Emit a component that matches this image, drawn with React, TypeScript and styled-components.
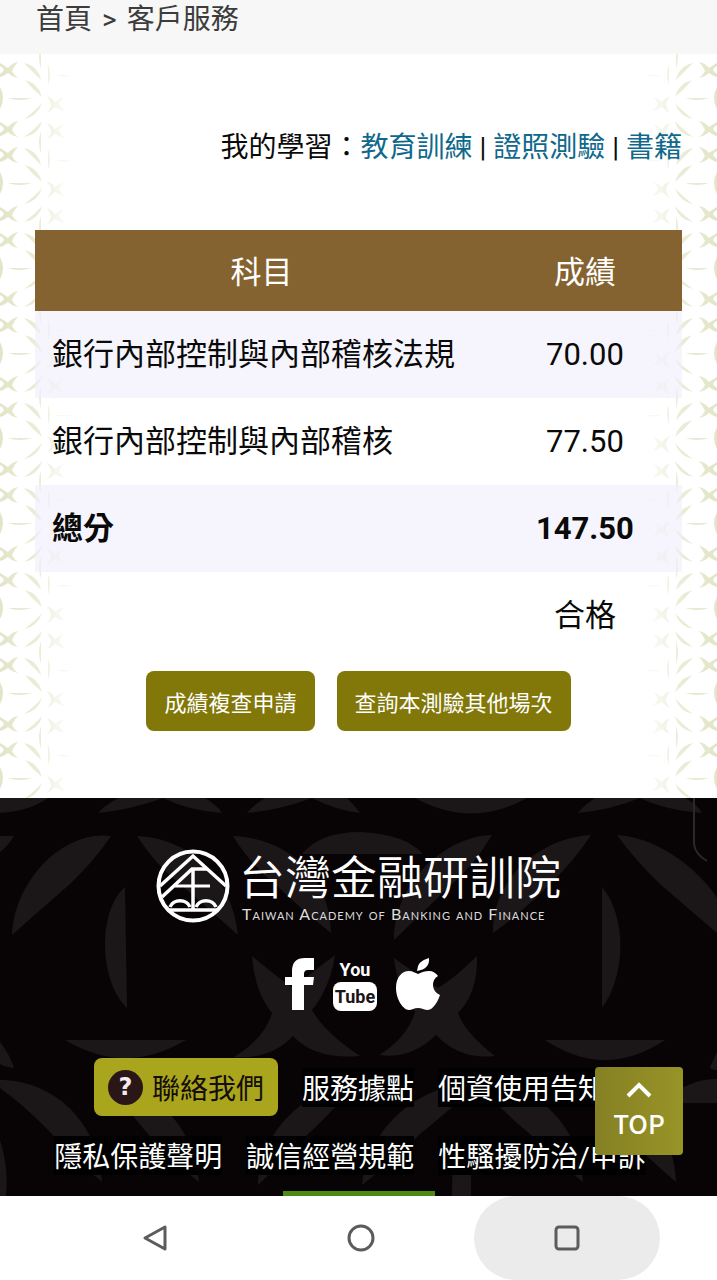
import React from "react";
import styled, { createGlobalStyle } from "styled-components";

const GlobalStyle = createGlobalStyle`
  *, *::before, *::after { box-sizing: border-box; }
  html, body { margin: 0; padding: 0; background: #fff; }
  body {
    font-family: Roboto, "Noto Sans CJK TC", sans-serif;
    font-size: 28px;
    color: #0a0a0a;
  }
  a { color: inherit; text-decoration: none; }
  button { font: inherit; border: 0; cursor: pointer; }
`;

const Page = styled.div`
  min-height: 100vh;
  display: flex;
  flex-direction: column;
`;

const Breadcrumb = styled.nav`
  display: flex;
  gap: 10px;
  padding: 0 36px 14px;
  line-height: 40px;
  background: #f7f7f7;
  color: #3c3c3c;
`;

const Main = styled.main`
  position: relative;
  padding: 72px 35px 67px;
`;

const SideArt = styled.svg<{ $side: "left" | "right" }>`
  position: absolute;
  top: 0;
  ${(p) => p.$side}: 0;
  width: 80px;
  height: 100%;
  ${(p) => p.$side === "right" && "transform: scaleX(-1);"}
`;

const Content = styled.div`
  position: relative;
`;

const Learning = styled.p`
  margin: 0 0 60px;
  line-height: 44px;
  text-align: right;
`;

const TextLink = styled.a`
  && { color: #10688c; }
`;

const Scores = styled.table`
  width: 100%;
  border-collapse: collapse;
  table-layout: fixed;
  font-size: 31px;
  line-height: 40px;
`;

const HeadCell = styled.th<{ $width: string }>`
  width: ${(p) => p.$width};
  height: 81px;
  padding: 5px 17px 0;
  background: #856330;
  color: #fff;
  font-weight: 400;
  text-align: center;
`;

const Row = styled.tr<{ $shaded?: boolean; $strong?: boolean }>`
  background: ${(p) => (p.$shaded ? "rgba(240, 239, 251, 0.6)" : "transparent")};
  font-weight: ${(p) => (p.$strong ? 700 : 400)};
`;

const Cell = styled.td<{ $center?: boolean }>`
  height: 87px;
  padding: 0 17px;
  text-align: ${(p) => (p.$center ? "center" : "left")};
`;

const Actions = styled.div`
  display: flex;
  flex-wrap: wrap;
  justify-content: center;
  gap: 22px;
  margin-top: 12px;
`;

const ActionButton = styled.button`
  height: 60px;
  padding: 0 18px;
  border-radius: 8px;
  background: #827709;
  color: #fff;
  && { font-size: 22px; }
`;

const Footer = styled.footer`
  position: relative;
  overflow: hidden;
  display: flex;
  flex-direction: column;
  align-items: center;
  padding-top: 51px;
  background: #080405;
  color: #fff;
`;

const FooterArt = styled.svg`
  position: absolute;
  inset: 0;
  width: 100%;
  height: 100%;
`;

const Brand = styled.a`
  position: relative;
  display: flex;
  align-items: center;
  gap: 9px;
  height: 74px;
`;

const BrandNames = styled.span`
  display: flex;
  flex-direction: column;
  gap: 8px;
`;

const BrandName = styled.span`
  font-family: "Noto Sans CJK TC", sans-serif;
  font-weight: 350;
  font-size: 46px;
  line-height: 48px;
`;

const BrandLatin = styled.span`
  padding-left: 3px;
  color: #dcdcdc;
  font-family: Lato, sans-serif;
  font-variant: small-caps;
  font-size: 16px;
  line-height: 16px;
  letter-spacing: 1px;
  white-space: nowrap;
`;

const Social = styled.div`
  position: relative;
  display: flex;
  align-items: center;
  gap: 18px;
  height: 54px;
  margin-top: 34px;
  padding-left: 8px;
`;

const SocialLink = styled.a`
  display: flex;
`;

const YouTube = styled.a`
  display: flex;
  flex-direction: column;
  align-items: center;
  width: 44px;
  font-weight: 700;
  font-size: 18px;
  line-height: 24px;
`;

const Tube = styled.span`
  width: 44px;
  height: 29px;
  border-radius: 8px;
  background: #fff;
  color: #1a1617;
  line-height: 29px;
  text-align: center;
`;

const FooterLinks = styled.div`
  position: relative;
  display: flex;
  flex-direction: column;
  align-items: center;
  gap: 15px;
  margin-top: 47px;
  padding-right: 17px;
`;

const LinkRow = styled.div<{ $height: number }>`
  display: flex;
  align-items: center;
  gap: 24px;
  height: ${(p) => p.$height}px;
  white-space: nowrap;
`;

const FooterLink = styled.a`
  padding-top: 5px;
  background: #000;
  line-height: 34px;
`;

const Contact = styled.a`
  display: flex;
  align-items: center;
  gap: 9px;
  height: 58px;
  padding: 0 14px;
  border-radius: 8px;
  background: #a9a51d;
  && { color: #140d0a; }
`;

const QuestionMark = styled.span`
  width: 35px;
  height: 35px;
  border-radius: 50%;
  background: #2a1517;
  color: #f3e9ee;
  font-family: "DejaVu Sans", sans-serif;
  font-weight: 700;
  font-size: 24px;
  line-height: 35px;
  text-align: center;
`;

const Badge = styled.div`
  position: relative;
  width: 152px;
  height: 5px;
  margin-top: 12px;
  background: #4c8a12;
`;

const TopButton = styled.button`
  position: absolute;
  right: 34px;
  bottom: 41px;
  display: flex;
  flex-direction: column;
  align-items: center;
  gap: 8px;
  width: 88px;
  height: 88px;
  padding: 14px 0 0;
  border-radius: 4px;
  background: linear-gradient(90deg, #858024, #999426);
  color: #fff;
  && {
    font-family: "Noto Sans CJK TC", sans-serif;
    font-weight: 500;
    font-size: 26px;
    line-height: 32px;
  }
`;

const SystemBar = styled.nav`
  display: grid;
  grid-template-columns: repeat(3, 1fr);
  justify-items: center;
  padding: 0 47px 0 52px;
  background: #fff;
`;

const SystemButton = styled.button<{ $pressed?: boolean }>`
  display: flex;
  align-items: center;
  justify-content: center;
  width: 90%;
  height: 84px;
  padding: 0;
  border-radius: 42px;
  background: ${(p) => (p.$pressed ? "#ebebeb" : "transparent")};
`;

function SidePattern({ side }: { side: "left" | "right" }) {
  const tile = `${side}-tile`;
  const fade = `${side}-fade`;
  const mask = `${side}-mask`;
  return (
    <SideArt $side={side} aria-hidden="true">
      <defs>
        <pattern id={tile} width="80" height="85" patternUnits="userSpaceOnUse">
          <g fill="#e3e5c8">
            <path d="M0 9Q5 12 8 14Q12 9 18 8Q14 12 12 17Q14 21 18 24Q12 23 8 19Q4 22 0 23V20Q3 18 4 16Q3 13 0 12Z" />
            <path d="M0 68Q5 71 8 73Q12 68 18 67Q14 71 12 76Q14 80 18 83Q12 82 8 78Q4 81 0 82V79Q3 77 4 75Q3 72 0 71Z" />
            <path d="M0 33Q6 44 0 55Z" />
            <path d="M8 44H32Q20 48 8 44Z" />
            <path d="M24 9Q38 12 41 26Q33 18 24 9Z" />
            <path d="M25 26Q39 30 42 43Q33 36 25 26Z" />
            <path d="M42 49Q38 62 24 65Q33 59 42 49Z" />
            <path d="M42 67Q39 80 24 83Q33 77 42 67Z" />
            <path d="M41 -8Q37 3 41 15Z" />
            <path d="M41 77Q37 88 41 100Z" />
            <path d="M48 10Q52 20 48 31Z" />
            <path d="M56 21H73Q64 24 56 21Z" />
            <path d="M47 42Q52 44 55 48Q59 44 64 43Q60 47 59 50Q61 54 65 57Q59 56 55 53Q51 57 47 59Q51 54 51 50Q50 46 47 42Z" />
            <path d="M47 69Q52 71 55 75Q59 71 64 70Q60 74 59 77Q61 81 65 84Q59 83 55 80Q51 84 47 85Q51 81 51 77Q50 73 47 69Z" />
          </g>
        </pattern>
        <linearGradient id={fade}>
          <stop offset="0" stopColor="#fff" />
          <stop offset="0.5" stopColor="#fff" stopOpacity="0.7" />
          <stop offset="0.65" stopColor="#fff" stopOpacity="0.4" />
          <stop offset="1" stopColor="#fff" stopOpacity="0" />
        </linearGradient>
        <mask id={mask}>
          <rect width="80" height="100%" fill={`url(#${fade})`} />
        </mask>
      </defs>
      <rect width="80" height="100%" fill={`url(#${tile})`} mask={`url(#${mask})`} />
    </SideArt>
  );
}

function FooterPattern() {
  return (
    <FooterArt viewBox="0 0 717 398" preserveAspectRatio="xMidYMin slice" aria-hidden="true">
      <g fill="#1b1718">
        <path d="M0 0H48Q30 13 0 15Z" />
        <path d="M118 0H163Q130 12 98 15Q104 8 118 0Z" />
        <path d="M163 0H205Q218 8 222 15Q190 13 163 0Z" />
        <path d="M265 0H312Q280 12 247 15Q252 8 265 0Z" />
        <path d="M312 0H347Q355 8 360 15Q335 12 312 0Z" />
        <path d="M415 0H527Q472 31 415 0Z" />
        <path d="M595 0H640Q610 12 578 15Q583 8 595 0Z" />
        <path d="M640 0H685Q699 8 702 15Q665 12 640 0Z" />
        <path d="M0 38H14Q8 48 0 54Z" />
        <path d="M111 38C65 32 15 80 12 137Q40 112 70 86Q95 62 111 38Z" />
        <path d="M137 38C185 40 232 75 238 137Q210 112 180 86Q155 66 137 38Z" />
        <path d="M233 38C285 40 330 75 331 135Q302 112 275 86Q250 66 233 38Z" />
        <path d="M302 56Q320 34 360 34Q405 36 423 56Z" />
        <path d="M492 37C445 38 394 85 394 142Q425 112 452 86Q475 66 492 37Z" />
        <path d="M591 37C540 40 492 80 493 135Q525 112 550 86Q575 62 591 37Z" />
        <path d="M617 37C665 40 705 80 717 100V135Q690 112 660 86Q635 62 617 37Z" />
        <path d="M125 89C98 112 98 182 127 210Z" />
        <path d="M602 89C626 118 627 175 602 210Z" />
        <path d="M252 158Q285 185 293 190Q305 180 335 157Q330 190 312 212Q325 235 360 258Q315 262 293 238Q270 262 234 259Q265 240 272 215Q255 195 252 158Z" />
        <path d="M394 160Q425 182 438 190Q455 180 477 158Q478 195 458 215Q465 235 495 258Q460 262 436 237Q410 262 379 257Q407 240 415 214Q397 190 394 160Z" />
        <path d="M65 242H186Q125 278 65 242Z" />
        <path d="M545 242H665Q605 282 545 242Z" />
        <path d="M0 244Q10 257 14 270Q5 269 0 266Z" />
        <path d="M717 254V272Q710 272 710 269Z" />
        <path d="M0 282C50 282 98 320 102 384Q75 362 50 334Q25 308 0 290Z" />
        <path d="M110 282C155 290 195 330 199 384Q170 362 148 336Q125 310 110 282Z" />
        <path d="M355 284C310 290 260 330 258 387Q285 362 308 336Q335 312 355 284Z" />
        <path d="M479 284C430 284 370 320 362 387Q395 362 420 336Q450 312 479 284Z" />
        <path d="M479 284C530 284 578 320 583 384Q555 362 530 336Q500 312 479 284Z" />
        <path d="M580 284C625 284 674 320 676 384Q650 362 625 336Q600 312 580 284Z" />
        <path d="M660 305Q690 280 717 281V305Z" />
        <path d="M0 342Q9 370 6 398H0Z" />
        <path d="M453 342H471V398H452Z" />
      </g>
      <path d="M694 0V46Q695 56 707 63" fill="none" stroke="#2b2829" strokeWidth="2" />
    </FooterArt>
  );
}

function Emblem() {
  return (
    <svg width="74" height="74" viewBox="0 0 74 74" fill="none" stroke="#fff" strokeWidth="4" aria-hidden="true">
      <circle cx="37" cy="37" r="34.5" />
      <path d="M4 37L37 7L70 37" strokeWidth="3.5" />
      <path d="M6 48L36 20H51" strokeWidth="3.5" />
      <path d="M19 37H54" strokeWidth="3" />
      <path d="M37 19V60" strokeWidth="3.5" />
      <path d="M12 61H62" strokeWidth="3.5" />
      <path d="M14 58A10.500 9 0 0 1 34 58" strokeWidth="3.5" />
      <path d="M40 58A10.500 9 0 0 1 60 58" strokeWidth="3.5" />
    </svg>
  );
}

const rows = [
  { name: "銀行內部控制與內部稽核法規", score: "70.00", shaded: true },
  { name: "銀行內部控制與內部稽核", score: "77.50" },
  { name: "總分", score: "147.50", shaded: true, strong: true },
  { name: "", score: "合格" },
];

export default function App() {
  return (
    <Page>
      <GlobalStyle />
      <Breadcrumb aria-label="breadcrumb">
        <a href="#home">首頁</a>
        <span>&gt;</span>
        <a href="#service">客戶服務</a>
      </Breadcrumb>

      <Main>
        <SidePattern side="left" />
        <SidePattern side="right" />
        <Content>
          <Learning>
            我的學習：<TextLink href="#training">教育訓練</TextLink> |{" "}
            <TextLink href="#exams">證照測驗</TextLink> | <TextLink href="#books">書籍</TextLink>
          </Learning>
          <Scores>
            <thead>
              <tr>
                <HeadCell scope="col" $width="70%">科目</HeadCell>
                <HeadCell scope="col" $width="30%">成績</HeadCell>
              </tr>
            </thead>
            <tbody>
              {rows.map((r) => (
                <Row key={r.score} $shaded={r.shaded} $strong={r.strong}>
                  <Cell>{r.name}</Cell>
                  <Cell $center>{r.score}</Cell>
                </Row>
              ))}
            </tbody>
          </Scores>
          <Actions>
            <ActionButton type="button">成績複查申請</ActionButton>
            <ActionButton type="button">查詢本測驗其他場次</ActionButton>
          </Actions>
        </Content>
      </Main>

      <Footer>
        <FooterPattern />
        <Brand href="#home">
          <Emblem />
          <BrandNames>
            <BrandName>台灣金融研訓院</BrandName>
            <BrandLatin>Taiwan Academy of Banking and Finance</BrandLatin>
          </BrandNames>
        </Brand>
        <Social>
          <SocialLink href="#facebook" aria-label="Facebook">
            <svg width="30" height="54" viewBox="0 0 30 54" fill="#fff" aria-hidden="true">
              <path d="M29 1V13H23Q19 13 19 17V20H29L28 28H19V53H7V28H0V20H7V14Q7 1 20 1Z" />
            </svg>
          </SocialLink>
          <YouTube href="#youtube">
            <span>You</span>
            <Tube>Tube</Tube>
          </YouTube>
          <SocialLink href="#apple" aria-label="Apple">
            <svg width="45" height="54" viewBox="0 0 45 54" fill="#fff" aria-hidden="true">
              <path d="M34 1Q35 12 22 14Q22 4 34 1Z" />
              <path d="M23 17C27 15 30 14 34 14C38 14 41 16 43 19C36 23 36 34 45 38C43 44 38 53 33 53C29 53 27 51 23 51C19 51 17 53 14 53C8 53 1 42 1 31C1 20 7 14 14 14C18 14 20 16 23 17Z" />
            </svg>
          </SocialLink>
        </Social>
        <FooterLinks>
          <LinkRow $height={58}>
            <Contact href="#contact">
              <QuestionMark aria-hidden="true">?</QuestionMark>
              聯絡我們
            </Contact>
            <FooterLink href="#locations">服務據點</FooterLink>
            <FooterLink href="#personal-data">個資使用告知</FooterLink>
          </LinkRow>
          <LinkRow $height={48}>
            <FooterLink href="#privacy">隱私保護聲明</FooterLink>
            <FooterLink href="#integrity">誠信經營規範</FooterLink>
            <FooterLink href="#harassment">性騷擾防治/申訴</FooterLink>
          </LinkRow>
        </FooterLinks>
        <Badge />
        <TopButton type="button">
          <svg width="26" height="18" viewBox="0 0 26 18" fill="none" stroke="#fff" strokeWidth="4" aria-hidden="true">
            <path d="M2 15L13 4L24 15" />
          </svg>
          TOP
        </TopButton>
      </Footer>

      <SystemBar aria-label="system">
        <SystemButton type="button" aria-label="Back">
          <svg width="26" height="28" viewBox="0 0 26 28" fill="none" stroke="#5c5c5c" strokeWidth="3" strokeLinejoin="round" aria-hidden="true">
            <path d="M3 14L23 3V25Z" />
          </svg>
        </SystemButton>
        <SystemButton type="button" aria-label="Home">
          <svg width="28" height="28" viewBox="0 0 28 28" fill="none" stroke="#5c5c5c" strokeWidth="3" aria-hidden="true">
            <circle cx="14" cy="14" r="12" />
          </svg>
        </SystemButton>
        <SystemButton type="button" aria-label="Recent apps" $pressed>
          <svg width="26" height="26" viewBox="0 0 26 26" fill="none" stroke="#5c5c5c" strokeWidth="3" aria-hidden="true">
            <rect x="2" y="2" width="22" height="22" rx="3" />
          </svg>
        </SystemButton>
      </SystemBar>
    </Page>
  );
}
